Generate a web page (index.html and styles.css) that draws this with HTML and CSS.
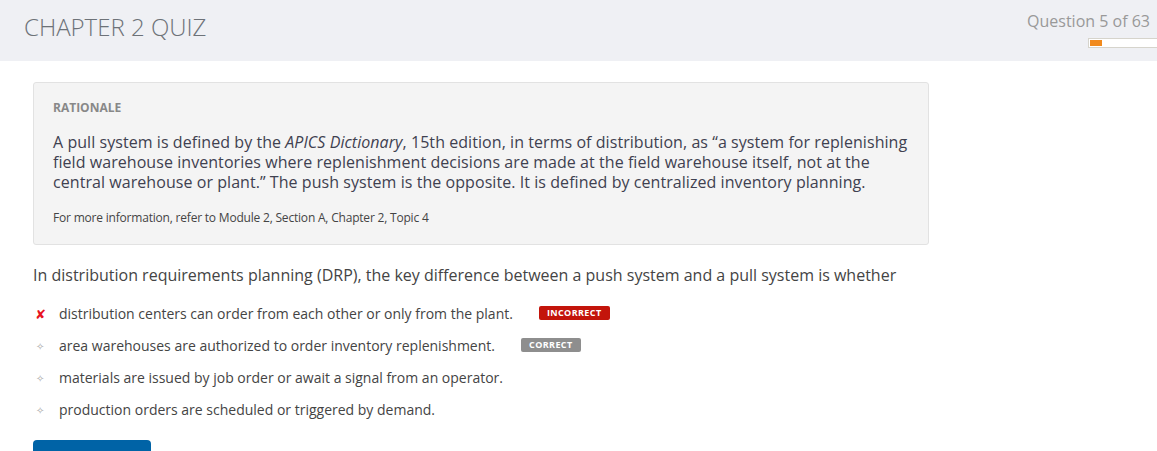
FILE: index.html
```html
<!DOCTYPE html>
<html>
<head>
<meta charset="utf-8">
<link rel="stylesheet" href="styles.css">
</head>
<body>
<header class="header">
  <h1 class="title">CHAPTER 2 QUIZ</h1>
  <div class="progress-wrap">
    <div class="counter">Question 5 of 63</div>
    <div class="progress"><div class="progress-fill" style="width:12px"></div></div>
  </div>
</header>
<main class="main">
  <section class="rationale">
    <div class="rationale-label">RATIONALE</div>
    <p class="rationale-text">A pull system is defined by the <em>APICS Dictionary</em>, 15th edition, in terms of distribution, as “a system for replenishing field warehouse inventories where replenishment decisions are made at the field warehouse itself, not at the central warehouse or plant.” The push system is the opposite. It is defined by centralized inventory planning.</p>
    <p class="rationale-ref">For more information, refer to Module 2, Section A, Chapter 2, Topic 4</p>
  </section>
  <p class="question">In distribution requirements planning (DRP), the key difference between a push system and a pull system is whether</p>
  <ul class="options">
    <li class="option"><span class="mark mark-x">✘</span><span class="opt-text">distribution centers can order from each other or only from the plant.</span><span class="badge badge-incorrect">INCORRECT</span></li>
    <li class="option"><span class="mark mark-dot">✧</span><span class="opt-text">area warehouses are authorized to order inventory replenishment.</span><span class="badge badge-correct">CORRECT</span></li>
    <li class="option"><span class="mark mark-dot">✧</span><span class="opt-text">materials are issued by job order or await a signal from an operator.</span></li>
    <li class="option"><span class="mark mark-dot">✧</span><span class="opt-text">production orders are scheduled or triggered by demand.</span></li>
  </ul>
  <button class="next-btn">Next</button>
</main>
</body>
</html>
```
FILE: styles.css
```css
* { box-sizing: border-box; }
html, body { margin: 0; padding: 0; }
body {
  font-family: "Open Sans", "Liberation Sans", sans-serif;
  background: #fff;
  color: #444;
  overflow: hidden;
  height: 451px;
}
.header {
  height: 61px;
  background: #eff0f4;
  display: flex;
  justify-content: space-between;
  align-items: flex-start;
  padding-left: 24px;
}
.title {
  margin: 9px 0 0;
  font-weight: 300;
  font-size: 24px;
  line-height: 36px;
  color: #6d7278;
}
.progress-wrap {
  display: flex;
  flex-direction: column;
  align-items: flex-end;
  padding-top: 10px;
}
.counter {
  font-size: 16px;
  line-height: 22px;
  color: #999;
  padding-right: 7px;
}
.progress {
  margin-top: 6px;
  width: 69px;
  height: 10px;
  background: #fff;
  border: 1px solid #d6d4cc;
  border-right: none;
  padding: 1px;
}
.progress-fill {
  height: 6px;
  background: #f18a1d;
}
.main {
  padding: 21px 33px 0;
}
.rationale {
  width: 896px;
  background: #f4f4f4;
  border: 1px solid #e2e2e2;
  border-radius: 3px;
  padding: 16px 19px 17px;
}
.rationale-label {
  font-size: 12px;
  font-weight: 700;
  color: #888;
  line-height: 18px;
}
.rationale-text {
  margin: 15px 0 0;
  font-size: 16px;
  letter-spacing: 0.06px;
  line-height: 20px;
  color: #3f4150;
}
.rationale-ref {
  margin: 17px 0 0;
  font-size: 12px;
  line-height: 18px;
  color: #444;
  letter-spacing: -0.2px;
}
.question {
  margin: 19px 0 0;
  font-size: 16px;
  line-height: 22px;
  color: #444;
}
.options {
  list-style: none;
  margin: 12px 0 0;
  padding: 0;
}
.option {
  display: flex;
  align-items: center;
  height: 32px;
  font-size: 14px;
  color: #444;
}
.mark {
  width: 26px;
  flex: none;
  text-align: left;
  padding-left: 1px;
}
.mark-x {
  color: #e8131f;
  font-size: 13px;
  font-family: "DejaVu Sans", sans-serif;
  padding-left: 2px;
}
.mark-dot {
  color: #aaa;
  font-size: 10px;
  font-family: "DejaVu Sans", sans-serif;
  padding-left: 3px;
}
.opt-text { line-height: 20px; }
.badge {
  margin-left: 26px;
  font-size: 9px;
  font-weight: 700;
  letter-spacing: 0.4px;
  color: #fff;
  line-height: 14px;
  padding: 0 8px;
  border-radius: 2px;
  margin-top: -2px;
}
.badge-incorrect { background: #c3150b; }
.badge-correct { background: #8e8e8e; }
.next-btn {
  margin-top: 14px;
  width: 118px;
  height: 40px;
  background: #0063a6;
  color: #fff;
  border: none;
  border-radius: 4px;
  font-family: inherit;
  font-size: 14px;
}
```
